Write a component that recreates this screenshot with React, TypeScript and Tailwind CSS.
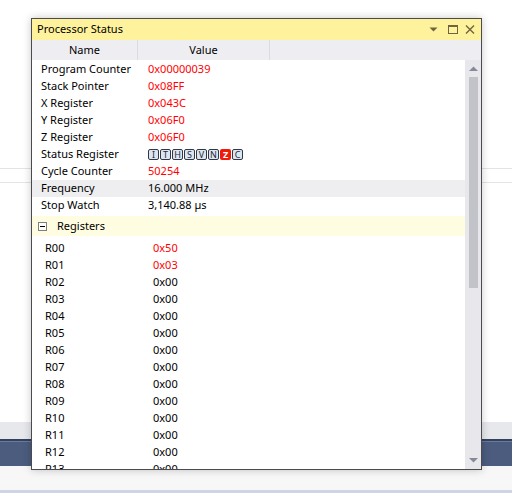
/**
 * Processor Status tool window
 * Floating debugger panel over an IDE background
 */

const font = { fontFamily: '"Noto Sans", "Open Sans", sans-serif' };

const statusRows: Array<{ name: string; value: string; red?: boolean; shaded?: boolean; flags?: boolean }> = [
  { name: "Program Counter", value: "0x00000039", red: true },
  { name: "Stack Pointer", value: "0x08FF", red: true },
  { name: "X Register", value: "0x043C", red: true },
  { name: "Y Register", value: "0x06F0", red: true },
  { name: "Z Register", value: "0x06F0", red: true },
  { name: "Status Register", value: "", flags: true },
  { name: "Cycle Counter", value: "50254", red: true },
  { name: "Frequency", value: "16.000 MHz", shaded: true },
  { name: "Stop Watch", value: "3,140.88 µs" },
];

const flags = ["I", "T", "H", "S", "V", "N", "Z", "C"];

const registers = Array.from({ length: 14 }, (_, i) => ({
  name: "R" + String(i).padStart(2, "0"),
  value: i === 0 ? "0x50" : i === 1 ? "0x03" : "0x00",
  red: i < 2,
}));

function FlagBox({ letter }: { letter: string }) {
  const set = letter === "Z";
  return (
    <div
      className={
        set
          ? "w-[11px] h-[11px] rounded-[2px] bg-[#f01a0a] text-white text-[9px] font-bold flex items-center justify-center"
          : "w-[11px] h-[11px] rounded-[2px] border border-[#303848] bg-[#dde5ef] text-[#1e2a3c] text-[9px] flex items-center justify-center"
      }
    >
      <span className="leading-none">{letter}</span>
    </div>
  );
}

function TitleGlyphs() {
  return (
    <div className="flex items-center gap-[7px] pr-[6px]">
      <svg width="9" height="5" viewBox="0 0 9 5">
        <path d="M0.5 0.5 L8.5 0.5 L4.5 4.5 Z" fill="#6f6440" />
      </svg>
      <svg width="10" height="9" viewBox="0 0 10 9" className="ml-[3px]">
        <rect x="0.5" y="0.5" width="9" height="8" fill="none" stroke="#6f6440" />
        <rect x="0" y="0" width="10" height="2" fill="#6f6440" />
      </svg>
      <svg width="10" height="9" viewBox="0 0 10 9">
        <path d="M1 0.5 L9 8.5 M9 0.5 L1 8.5" stroke="#6f6440" strokeWidth="1.4" />
      </svg>
    </div>
  );
}

export default function App() {
  return (
    <div className="relative w-[512px] h-[493px] overflow-hidden bg-white" style={font}>
      {/* IDE background */}
      <div className="flex flex-col h-full">
        <div className="h-[168px] bg-white" />
        <div className="h-[1px] bg-[#e4e4e6]" />
        <div className="h-[13px] bg-white" />
        <div className="h-[1px] bg-[#e4e4e6]" />
        <div className="h-[239px] bg-white" />
        <div className="h-[17px] bg-[#e7e8ec]" />
        <div className="h-[2px] bg-[#33415f]" />
        <div className="h-[1px] bg-[#6a7a9a]" />
        <div className="h-[24px] bg-[#4b5c7e]" />
        <div className="h-[24px] bg-[#f7f7f8]" />
        <div className="h-[3px] bg-[#cfd6e3]" />
      </div>

      {/* floating window */}
      <div className="absolute left-[31px] top-[18px] w-[451px] h-[452px] border border-[#4a4a4f] bg-white flex flex-col shadow-[0_0_8px_rgba(0,0,0,0.22)]">
        <div className="h-[21px] bg-[#fff29d] flex items-center justify-between">
          <span className="pl-[5px] text-[11px] text-black">Processor Status</span>
          <TitleGlyphs />
        </div>

        <div className="h-[20px] bg-[#eeeef2] flex text-[11px] text-black">
          <div className="w-[106px] border-r border-[#dcdce0] flex items-center justify-center">Name</div>
          <div className="w-[132px] border-r border-[#dcdce0] flex items-center justify-center">Value</div>
        </div>

        <div className="flex-1 flex min-h-0">
          <div className="flex-1 overflow-hidden pt-[1px] text-[11px] text-black">
            {statusRows.map((row) => (
              <div key={row.name} className={row.shaded ? "h-[17px] flex items-center bg-[#eeeef0]" : "h-[17px] flex items-center"}>
                <div className="w-[116px] pl-[9px]">{row.name}</div>
                {row.flags ? (
                  <div className="flex gap-[1px]">
                    {flags.map((f) => (
                      <FlagBox key={f} letter={f} />
                    ))}
                  </div>
                ) : (
                  <div className={row.red ? "text-[#ff0000]" : ""}>{row.value}</div>
                )}
              </div>
            ))}

            <div className="mt-[2px] mb-[4px] h-[20px] bg-[#fffde1] flex items-center">
              <div className="ml-[6px] w-[9px] h-[9px] border border-[#7f7f7f] bg-white flex items-center justify-center">
                <div className="w-[5px] h-[1px] bg-black" />
              </div>
              <span className="ml-[10px]">Registers</span>
            </div>

            {registers.map((r) => (
              <div key={r.name} className="h-[17px] flex items-center">
                <div className="w-[121px] pl-[13px]">{r.name}</div>
                <div className={r.red ? "text-[#ff0000]" : ""}>{r.value}</div>
              </div>
            ))}
          </div>

          {/* scrollbar */}
          <div className="w-[16px] bg-[#e8e8ec] flex flex-col items-center">
            <svg width="9" height="5" viewBox="0 0 9 5" className="mt-[6px]">
              <path d="M0 5 L4.5 0.5 L9 5 Z" fill="#868999" />
            </svg>
            <div className="mt-[6px] w-[9px] h-[211px] bg-[#c2c3c9]" />
            <div className="flex-1" />
            <svg width="9" height="5" viewBox="0 0 9 5" className="mb-[6px]">
              <path d="M0 0 L9 0 L4.5 4.5 Z" fill="#868999" />
            </svg>
          </div>
        </div>
      </div>
    </div>
  );
}
